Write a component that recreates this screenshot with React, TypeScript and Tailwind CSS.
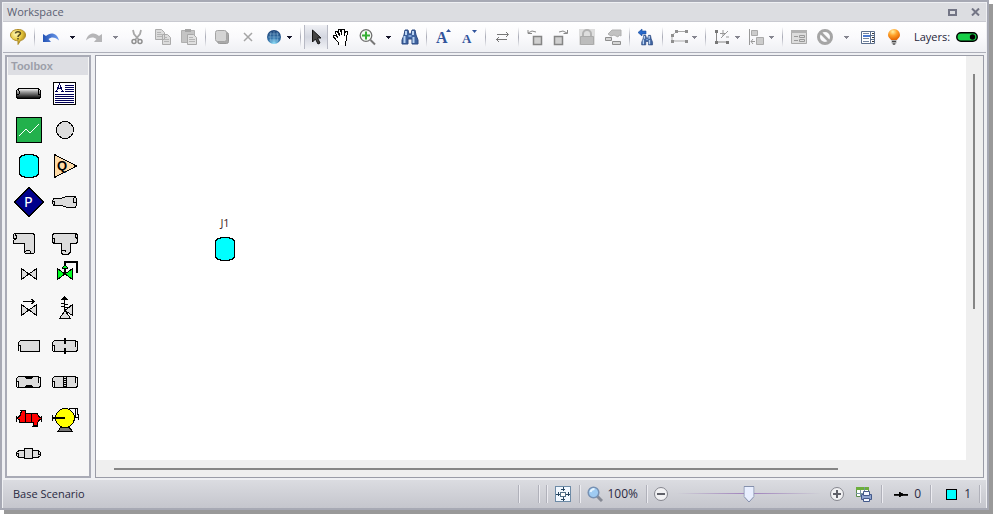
import { useState } from "react";
import type { ReactNode } from "react";

const DropArrow = ({ dim, tight }: { dim?: boolean; tight?: boolean }) => (
  <button
    aria-label="More options"
    className={`flex h-6 shrink-0 items-center ${tight ? "w-[10px] justify-start" : "w-[17px] justify-center"}`}
  >
    <svg width="5" height="3" shapeRendering="crispEdges">
      <path d="M0 0h5v1h-1v1h-1v1h-1v-1h-1v-1h-1z" fill={dim ? "#85858f" : "#15152a"} />
    </svg>
  </button>
);

const Separator = () => (
  <span className="flex h-5 w-[7px] shrink-0 justify-center">
    <span className="w-px bg-linear-to-b from-transparent via-[#a9abb6] to-transparent" />
  </span>
);

function Tool({ label, narrow, active, children }: { label: string; narrow?: boolean; active?: boolean; children: ReactNode }) {
  return (
    <button
      aria-label={label}
      className={`flex h-6 shrink-0 items-center justify-center ${narrow ? "w-6" : "w-[26px]"} ${
        active ? "border-x border-[#b7b9c4] bg-linear-to-b from-[#f0f1f5] via-[#d3d6e0] to-[#f0f1f5]" : ""
      }`}
    >
      <svg width="18" height="18" viewBox="0 0 18 18" fill="none" className="overflow-visible">
        {children}
      </svg>
    </button>
  );
}

const Binoculars = () => (
  <>
    <path d="M4 2h3l1 4h2l1-4h3l1 5 2 5v4h-6v-5h-4v5h-6v-4l2-5z" fill="#3f639f" stroke="#2c4a82" />
    <path d="M3.500 8v7M5 3v4M12 3v4M12.500 9v6" stroke="#b9d3f2" strokeWidth="2" />
    <path d="M7.500 7h3v2h-3z" fill="#7ea2d6" />
  </>
);

function Toolbar() {
  return (
    <div className="flex h-[30px] items-center overflow-hidden bg-linear-to-b from-white via-[#fafafc] to-[#eff0f4] pl-0.5">
      <Tool label="Help">
        <defs>
          <radialGradient id="gold" cx=".35" cy=".3" r=".8">
            <stop offset="0" stopColor="#fff8b8" />
            <stop offset=".5" stopColor="#e6c73c" />
            <stop offset="1" stopColor="#94700f" />
          </radialGradient>
        </defs>
        <path d="M9 1.500c5 0 7.500 2.500 7.500 5.500 0 2.800-2 5-5 5.500L9 16.500v-3.700C4.500 12.500 1.500 10 1.500 7 1.500 4 4.500 1.500 9 1.500z" fill="url(#gold)" stroke="#b08c28" />
        <path d="M6.500 5.500c0-2.500 5-2.500 5 0 0 1.500-2.500 1.500-2.500 3.500M9 10v1.500" stroke="#544a20" strokeWidth="1.500" />
      </Tool>
      <Separator />
      <Tool label="Undo">
        <defs>
          <linearGradient id="undo" x1="0" x2="1">
            <stop offset="0" stopColor="#2453b5" />
            <stop offset="1" stopColor="#6d9bec" />
          </linearGradient>
        </defs>
        <path d="M1 6v8h8l-2.500-3c3-2.500 7-2 10.500 1.500C15.500 5 8.500 3.500 4 8z" fill="url(#undo)" />
      </Tool>
      <DropArrow />
      <Tool label="Redo">
        <path d="M17 6v8H9l2.500-3c-3-2.500-7-2-10.500 1.500C2.500 5 9.500 3.500 14 8z" fill="#b5b5b7" />
      </Tool>
      <DropArrow dim />
      <Tool label="Cut">
        <path d="M5 2l1 4 5 6M13 2l-1 4-5 6" stroke="#a8a8a8" strokeWidth="1.800" />
        <circle cx="6" cy="13.500" r="2" stroke="#909090" strokeWidth="1.500" />
        <circle cx="12" cy="13.500" r="2" stroke="#909090" strokeWidth="1.500" />
      </Tool>
      <Tool label="Copy">
        <path d="M1.500 1.500h6l3 3v7h-9zM8.500 6.500h5l3 3v7h-8z" fill="#dcdcdc" stroke="#ababab" />
        <path d="M3 4.500h4M3 6.500h5M3 8.500h5M10 9.500h3M10 11.500h5M10 13.500h5" stroke="#b5b5b5" />
      </Tool>
      <Tool label="Paste">
        <path d="M1.500 2.500h13v12h-13z" fill="#c4c4c4" stroke="#b0b0b0" />
        <path d="M5 1h6v3H5z" fill="#a5a5a5" />
        <path d="M7.500 6.500h6l3 3v7h-9z" fill="#e0e0e0" stroke="#a8a8a8" />
        <path d="M9 9.500h4M9 11.500h6M9 13.500h6" stroke="#b5b5b5" />
      </Tool>
      <Separator />
      <Tool label="Duplicate">
        <rect x="4.500" y="4.500" width="11" height="11" rx="2" fill="#aaa" stroke="#999" />
        <rect x="2.500" y="2.500" width="11" height="11" rx="2" fill="#d4d4d4" stroke="#a4a4a4" />
      </Tool>
      <Tool label="Delete">
        <path d="M5 5l8 8M13 5l-8 8" stroke="#a5a5a5" strokeWidth="1.500" />
      </Tool>
      <Tool label="Globe">
        <defs>
          <radialGradient id="globe" cx=".5" cy=".95" r=".9">
            <stop offset="0" stopColor="#8de0fa" />
            <stop offset=".45" stopColor="#3474ab" />
            <stop offset="1" stopColor="#1d4479" />
          </radialGradient>
        </defs>
        <circle cx="9" cy="9" r="7" fill="url(#globe)" />
        <path d="M4 6h10M3 9h12M4 12h10M9 3v12M6 4q-2 5 0 10M12 4q2 5 0 10" stroke="#a5cfe8" strokeOpacity=".4" />
      </Tool>
      <DropArrow tight />
      <Separator />
      <Tool label="Select" narrow active>
        <path d="M5.500 2v12l3-3 2.500 5 2-1-2.500-5H14z" fill="#444" stroke="#111" />
      </Tool>
      <Tool label="Pan">
        <path
          d="M6.500 16.500v-2l-5-5.500v-1.500h2l2 2L3.500 4.500v-1h1.500l2.500 4-1-5v-1h2l1 5.500.5-5.500h2v6l1.500-4.500h1.500l.5 1.500-1 4.500v3l-1.500 3v2.500"
          fill="#fff"
          stroke="#000"
          shapeRendering="crispEdges"
        />
      </Tool>
      <Tool label="Zoom">
        <circle cx="8" cy="7.500" r="5.800" fill="#f4faf4" stroke="#707070" strokeWidth="1.300" />
        <path d="M12.500 12l4.500 4.500" stroke="#777" strokeWidth="2" />
        <path d="M8 3.500v8M4 7.500h8" stroke="#35ae35" strokeWidth="2" />
      </Tool>
      <DropArrow />
      <Tool label="Find"><Binoculars /></Tool>
      <Separator />
      <Tool label="Increase font">
        <text x="2" y="15" fontFamily="Liberation Serif, serif" fontSize="16" fontWeight="700" fill="#31549c">A</text>
        <path d="M12 4h5l-2.500-3z" fill="#31549c" />
      </Tool>
      <Tool label="Decrease font">
        <text x="2" y="15" fontFamily="Liberation Serif, serif" fontSize="13" fontWeight="700" fill="#31549c">A</text>
        <path d="M12 2h5l-2.500 3z" fill="#31549c" />
      </Tool>
      <Separator />
      <Tool label="Reverse">
        <path d="M4 6.500h11M13 4l2.500 2.500L13 9M14 11.500H3M6 9l-2.500 2.500L6 14" stroke="#777" />
      </Tool>
      <Separator />
      <Tool label="Rotate left">
        <path d="M7.500 8.500h8v8h-8z" fill="#d0d0d0" stroke="#858585" strokeWidth="1.500" />
        <path d="M10 4L6 3 2 5M2 2v3.500h4" stroke="#888" />
      </Tool>
      <Tool label="Rotate right">
        <path d="M2.500 8.500h8v8h-8z" fill="#d0d0d0" stroke="#858585" strokeWidth="1.500" />
        <path d="M7 4l4-1 4 2M15.500 2v3.500h-4" stroke="#888" />
      </Tool>
      <Tool label="Lock">
        <path d="M1 1h16v16H1z" fill="#dedede" />
        <path d="M5 8V6a4 4 0 018 0v2" stroke="#b3b3b3" strokeWidth="2" />
        <path d="M2.500 8.500h13v8h-13z" fill="#bcbcbc" stroke="#aaa" />
      </Tool>
      <Tool label="Annotate">
        <path d="M4 6l4-4h9v6l-2-1-1 2-4-2-3 1z" fill="#c2c2c2" stroke="#b0b0b0" />
        <path d="M1.500 9.500h6v3h-6zM8.500 13.500h8v3h-8z" fill="#d5d5d5" stroke="#8e8e8e" />
      </Tool>
      <Separator />
      <Tool label="Find previous">
        <g transform="translate(4 6) scale(.68)"><Binoculars /></g>
        <path d="M1 4.500L5 1v2h4v3H5v2z" fill="#2768c9" stroke="#1a4c9b" strokeWidth=".6" />
      </Tool>
      <Separator />
      <Tool label="Segments">
        <path d="M5 3.500h12M4.500 5L2 8.500v4L5 13h11" stroke="#aaa" />
        <path d="M5 2h3v3H5zM15 2h3v3h-3zM1 6h3v3H1zM1 12h3v3H1zM15 12h3v3h-3z" fill="#8f8f8f" />
      </Tool>
      <DropArrow dim tight />
      <Separator />
      <Tool label="Scale">
        <path d="M3.500 3v11h11" stroke="#888" />
        <path d="M2 2h3v3H2zM2 13h3v3H2zM13 13h3v3h-3z" fill="#777" />
        <path d="M7 5.500h6M10 2v6M15 3l-7 7M13 9h3" stroke="#999" />
      </Tool>
      <DropArrow dim tight />
      <Tool label="Align" narrow>
        <path d="M1.500 1v16M3 13.500h4M5 11l-2 2.500L5 16" stroke="#999" />
        <path d="M3.500 2.500h6v5h-6zM8.500 9.500h7v7h-7z" fill="#ccc" stroke="#aaa" />
      </Tool>
      <DropArrow dim tight />
      <Separator />
      <Tool label="Properties">
        <path d="M1.500 2.500h15v13h-15z" fill="#ddd" stroke="#aaa" />
        <path d="M1 2h16v3H1z" fill="#b2b2b2" />
        <path d="M4 8.500h4M4 12.500h4M9.500 7.500h5v2h-5zM9.500 11.500h5v2h-5z" stroke="#999" />
      </Tool>
      <Tool label="Disable">
        <circle cx="9" cy="9" r="6.500" stroke="#a5a5a5" strokeWidth="3" />
        <path d="M4.500 4.500l9 9" stroke="#a5a5a5" strokeWidth="2.500" />
      </Tool>
      <DropArrow dim />
      <Tool label="Output list">
        <path d="M2.500 3.500h13v12h-13z" fill="#fff" stroke="#5b6e8c" />
        <path d="M4 5.500h6M4 10.500h6M4 13.500h6" stroke="#74859f" />
        <path d="M4 8h7" stroke="#4b7ad2" strokeWidth="2" />
        <path d="M11.500 4v11M12 7.500h3M12 11.500h3" stroke="#5b6e8c" />
        <path d="M13 5h2v1h-2zM13 9h2v1h-2zM13 13h2v1h-2z" fill="#333" />
      </Tool>
      <Tool label="Hints">
        <defs>
          <radialGradient id="bulb" cx=".4" cy=".25" r=".7">
            <stop offset="0" stopColor="#fff0a0" />
            <stop offset=".5" stopColor="#ffa128" />
            <stop offset="1" stopColor="#e56c08" />
          </radialGradient>
        </defs>
        <path d="M9 1a6 6 0 016 6c0 2.500-2.500 3.500-3 5H6C5.500 10.500 3 9.500 3 7a6 6 0 016-6z" fill="url(#bulb)" />
        <path d="M6.500 12h5v3l-1.500 2H8l-1.500-2z" fill="#aaa" />
        <path d="M7 13.500h4M8 16h2" stroke="#444" />
      </Tool>
      <span className="ml-[7px] text-[#1e1e3a]">Layers:</span>
      <button aria-label="Layers" className="ml-1.5 shrink-0">
        <svg width="22" height="10">
          <rect x=".8" y=".8" width="20.400" height="8.400" rx="4.200" fill="#17cf48" stroke="#000" strokeWidth="1.500" />
          <circle cx="16.500" cy="5" r="2.700" />
        </svg>
      </button>
    </div>
  );
}

const Tank = () => (
  <path
    d="M13.500 7.500h9v1h3v1h1v1h1v17h-1v1h-1v1h-3v1h-9v-1h-3v-1h-1v-1h-1v-17h1v-1h1v-1h3z"
    fill="#0ff"
    stroke="#000"
  />
);

const PipeBody = ({ left = 5, right = 29 }: { left?: number; right?: number }) => (
  <>
    <rect x={left + 0.5} y="13.500" width={right - left} height="11" rx="3" fill="#dcdcdc" stroke="#000" />
    <ellipse cx={left + 1.5} cy="21" rx="1.500" ry="3" fill="#f7f7f7" stroke="#000" />
    <ellipse cx={right - 0.5} cy="17" rx="1.500" ry="3" fill="#f7f7f7" stroke="#000" />
  </>
);

const Bowtie = ({ fill = "#dcdcdc" }: { fill?: string }) => (
  <path d="M10.500 13.500v11l15-11v11z" fill={fill} stroke="#000" />
);

const junctions: { name: string; art: ReactNode }[] = [
  {
    name: "Pipe",
    art: (
      <>
        <defs>
          <linearGradient id="pipe" x1="0" y1="0" x2="0" y2="1">
            <stop offset="0" stopColor="#fff" />
            <stop offset=".35" stopColor="#999" />
            <stop offset="1" stopColor="#000" />
          </linearGradient>
        </defs>
        <rect x="5.500" y="13.500" width="24" height="10" rx="3" fill="url(#pipe)" stroke="#000" />
        <path d="M7 14l1 2v3l-2 1M28 14l-1 2v3l2 1" stroke="#000" />
      </>
    ),
  },
  {
    name: "Annotation",
    art: (
      <>
        <path d="M6.500 7.500h22v22h-22z" fill="#fff" stroke="#000" />
        <path d="M18 10.500h9M18 12.500h9M18 14.500h9M18 16.500h9M8 19.500h19M8 21.500h19M8 23.500h19M8 25.500h19M8 27.500h19" stroke="#000058" />
        <path d="M8 16.500h3M14 16.500h3M9.500 16l3-7 3 7M11 13.500h4" stroke="#000058" />
      </>
    ),
  },
  {
    name: "Graph",
    art: (
      <>
        <path d="M5.500 6.500h25v25h-25z" fill="#22b14c" stroke="#000" />
        <path d="M8 25l7-7 4 4 9-9" stroke="#fff" />
      </>
    ),
  },
  { name: "Branch", art: <circle cx="18" cy="19" r="8.500" fill="#dcdcdc" stroke="#000" /> },
  { name: "Reservoir", art: <Tank /> },
  {
    name: "Assigned flow",
    art: (
      <>
        <path d="M7.500 7.500v23L29.500 19z" fill="#ffdca8" stroke="#000" />
        <text x="10" y="23" fontFamily="Liberation Sans, sans-serif" fontSize="13" fontWeight="700" fill="#000">Q</text>
      </>
    ),
  },
  {
    name: "Assigned pressure",
    art: (
      <>
        <path d="M18 4.500L32.500 19 18 33.500 3.500 19z" fill="#00008b" stroke="#000" />
        <text x="13" y="24" fontFamily="DejaVu Sans, sans-serif" fontSize="14" fill="#fff">P</text>
      </>
    ),
  },
  {
    name: "Area change",
    art: (
      <>
        <path d="M7 15.500h7l5-2h9l1.500 2v7l-1.500 2h-8l-5-2H7l-1.500-2v-3z" fill="#dcdcdc" stroke="#000" />
        <path d="M5.500 18.500h2v4h-1M28 14l-1.500 2v3l2.500 1" stroke="#000" />
      </>
    ),
  },
  {
    name: "Bend",
    art: (
      <>
        <path d="M3.500 14.500h18l2 1v18l-1 1h-8l-1-1v-9h-11v-3l1-1-1-2v-3z" fill="#dcdcdc" stroke="#000" />
        <path d="M3.500 14.500l1.500 2v3l-1.500 2M13.500 33l2-1.500h3l1.500 2" stroke="#000" />
      </>
    ),
  },
  {
    name: "Tee",
    art: (
      <>
        <path d="M7 14.500h22l1.500 1.500v7l-1.500 1.500h-6v9l-1.500 1.500h-6l-1.500-1.500v-9h-7l-1.500-1.500v-7z" fill="#dcdcdc" stroke="#000" />
        <path d="M6 19.500h1.500v4M30 19.500l-2-1.500v-3M14 33l2-1.500h2l1.500 2" stroke="#000" />
      </>
    ),
  },
  { name: "Valve", art: <Bowtie /> },
  {
    name: "Control valve",
    art: (
      <>
        <Bowtie fill="#00ff21" />
        <path d="M18 19v-6" stroke="#000" strokeWidth="2" />
        <path d="M15.500 13.500v-1l2-2h1l2 2v1z" fill="#00ff21" stroke="#000" />
        <path d="M18 10V7h12v11" stroke="#000" strokeWidth="2" />
      </>
    ),
  },
  {
    name: "Check valve",
    art: (
      <>
        <Bowtie />
        <path d="M12 10.500h11M20.500 8l2.500 2.500-2.500 2.500" stroke="#000" />
      </>
    ),
  },
  {
    name: "Relief valve",
    art: (
      <>
        <path d="M18 19.500l7.500-6v11zM18 19.500l-5.500 8h11z" fill="#dcdcdc" stroke="#000" />
        <path d="M17.500 19V8M14 12l7 2M14 15l7 2" stroke="#000" />
        <path d="M13 9h9l-4.500-4z" fill="#000" />
      </>
    ),
  },
  {
    name: "Dead end",
    art: (
      <>
        <path d="M9.500 13.500h19v11h-19l-2-2v-7z" fill="#dcdcdc" stroke="#000" />
        <ellipse cx="8.500" cy="21" rx="1.500" ry="3" fill="#f7f7f7" stroke="#000" />
      </>
    ),
  },
  {
    name: "Orifice",
    art: (
      <>
        <PipeBody right={30} />
        <path d="M18 11v6M18 21v6" stroke="#000" strokeWidth="2" />
      </>
    ),
  },
  {
    name: "Venturi",
    art: (
      <>
        <PipeBody />
        <path d="M12 13h11l-3 3h-5zM12 25h11l-3-3h-5z" fill="#000" />
      </>
    ),
  },
  {
    name: "Screen",
    art: (
      <>
        <PipeBody right={30} />
        <path d="M16.500 13v12M19.500 13v12M17 15.500h3M17 17.500h3M17 19.500h3M17 21.500h3M17 23.500h3" stroke="#000" />
      </>
    ),
  },
  {
    name: "Heat exchanger",
    art: (
      <>
        <path d="M5.500 17v6M30.500 17v6" stroke="#000" />
        <path d="M6 19.500l3-3V14l1-.5v-2h4v3h12l2 3 2.500 2-2.500 2-2 3v2h-4v-3H9l-1-3z" fill="#f00" stroke="#000" />
        <path d="M14.500 14v10M20.500 14v10M9 11.500h6M21 27h6" stroke="#000" />
      </>
    ),
  },
  {
    name: "Pump",
    art: (
      <>
        <path d="M14 28h8l3 4H11z" fill="#777" stroke="#000" />
        <circle cx="18" cy="19" r="9.500" fill="#ff0" stroke="#000" />
        <path d="M6 19h12" stroke="#000" strokeWidth="2" />
        <path d="M5.500 16v6M22 9.500h8V16M28.500 10v8h3M31.500 15v6" stroke="#000" />
      </>
    ),
  },
  {
    name: "General component",
    art: (
      <>
        <path d="M8 15.500h19l2.500 2v3l-2.500 2H8l-2.500-2v-3z" fill="#dcdcdc" stroke="#000" />
        <path d="M5.500 18.500h2v3M29.500 19.500h-2v-3" stroke="#000" />
        <path d="M13.500 13.500h8v10h-8z" fill="#dcdcdc" stroke="#000" />
      </>
    ),
  },
];

function Toolbox() {
  return (
    <aside className="flex w-[86px] shrink-0 flex-col border-2 border-[#a9abb6] bg-[#f7f7f7]">
      <h2 className="mx-px flex h-[18px] items-center bg-[#dddee3] pl-[3px] font-['Liberation_Sans',sans-serif] text-[11px] font-bold text-[#9c9ea9]">
        Toolbox
      </h2>
      <div className="grid grid-cols-[36px_36px] pl-1">
        {junctions.map(({ name, art }) => (
          <button key={name} aria-label={name} className="size-9">
            <svg width="36" height="36" fill="none" shapeRendering="crispEdges">
              {art}
            </svg>
          </button>
        ))}
      </div>
    </aside>
  );
}

function Canvas() {
  return (
    <main className="flex min-w-0 flex-1 flex-col border border-[#9a9ca7] bg-[#efefef]">
      <div className="flex flex-1">
        <div className="relative flex-1 bg-white">
          <div className="absolute top-[160px] left-[111px] flex w-9 flex-col items-center text-black">
            <span className="h-[14px] leading-[13px] text-[#40201c]">J1</span>
            <svg width="36" height="36" fill="none" shapeRendering="crispEdges">
              <Tank />
            </svg>
          </div>
        </div>
        <div className="flex w-[17px] justify-center pt-[18px] pr-0.5">
          <div className="h-[61%] w-0.5 bg-[#868686]" />
        </div>
      </div>
      <div className="flex h-[17px] items-center pr-[17px] pl-[18px]">
        <div className="h-0.5 w-[85%] bg-[#868686]" />
      </div>
    </main>
  );
}

const StatusLine = () => <span className="h-[18px] w-px shrink-0 bg-[#b0b1ba] shadow-[1px_0_0_#ececf1]" />;

function ZoomButton({ plus }: { plus?: boolean }) {
  return (
    <button aria-label={plus ? "Zoom in" : "Zoom out"}>
      <svg width="16" height="16" fill="none">
        <circle cx="8" cy="8" r="6.500" fill="#f2f2f4" stroke="#85868e" />
        <path d={plus ? "M4 8h8M8 4v8" : "M4 8h8"} stroke="#606169" strokeWidth="2" />
      </svg>
    </button>
  );
}

function StatusBar() {
  const [zoom, setZoom] = useState(50);

  return (
    <footer className="flex h-7 items-center bg-linear-to-b from-[#dbdce1] to-[#c5c6cd] pr-1.5 pl-2.5 text-[#2a2a42]">
      <span>Base Scenario</span>
      <div className="ml-auto flex items-center">
        <StatusLine />
        <span className="w-[19px]" />
        <StatusLine />
        <span className="w-[7px]" />
        <StatusLine />
        <button aria-label="Fit to window" className="mx-2">
          <svg width="16" height="16" fill="none" shapeRendering="crispEdges">
            <path d="M.5.5h15v15H.5z" fill="#f2f8ff" stroke="#6c8aa6" />
            <path d="M8 1v4M8 11v4M1 8h4M11 8h4M6 3h4M6 13h4M3 6v4M13 6v4" stroke="#284660" />
            <path d="M5.500 6.500h5v4h-5z" fill="#fff" stroke="#537088" />
          </svg>
        </button>
        <StatusLine />
        <button className="flex items-center gap-1 pr-2 pl-[7px] text-xs">
          <svg width="16" height="16" fill="none">
            <path d="M10 10l5 5" stroke="#858994" strokeWidth="3" />
            <circle cx="6.500" cy="6.500" r="5.300" fill="#9fcbf2" stroke="#7791b3" strokeWidth="1.500" />
            <path d="M3.500 6q1-3 4-3" stroke="#e7f5ff" strokeWidth="2" />
          </svg>
          {zoom * 2}%
        </button>
        <StatusLine />
        <div className="flex items-center gap-2 px-1.5">
          <ZoomButton />
          <div className="relative h-4 w-36">
            <div className="mt-[7px] h-px bg-linear-to-r from-transparent via-[#9e7fbb] to-transparent" />
            <svg width="11" height="17" fill="none" className="absolute top-0 -translate-x-1/2" style={{ left: `${zoom}%` }}>
              <path d="M.5.5h10v10l-5 5.500-5-5.500z" fill="#e9efff" stroke="#8590ac" />
            </svg>
            <input
              type="range"
              aria-label="Zoom level"
              min={5}
              max={95}
              value={zoom}
              onChange={(e) => setZoom(Number(e.target.value))}
              className="absolute inset-0 w-full opacity-0"
            />
          </div>
          <ZoomButton plus />
        </div>
        <button aria-label="Print layout" className="mr-2 ml-1">
          <svg width="18" height="16" fill="none">
            <path d="M1.500 1.500h12v9h-12z" fill="#fff" stroke="#5b8b49" />
            <path d="M1 1h13v3H1z" fill="#6cae3c" />
            <path d="M1 7.500h8M5.500 4v7M9.500 1v6" stroke="#7695a0" />
            <path d="M6.500 8.500h10v5h-10z" fill="#8ea4cf" stroke="#43598a" />
            <path d="M8.500 5.500h6v4h-6zM8.500 12.500h6v3h-6z" fill="#f3f7ff" stroke="#43598a" />
          </svg>
        </button>
        <StatusLine />
        <span className="flex w-12 items-center justify-between pr-[9px] pl-3 text-xs">
          <svg width="14" height="7" shapeRendering="crispEdges">
            <path d="M0 3h14v1H0zM5 1l5 2.500-5 2.500z" stroke="#000" strokeWidth=".8" />
          </svg>
          0
        </span>
        <StatusLine />
        <span className="flex w-12 items-center justify-between pr-2 pl-[15px] text-xs">
          <span className="size-[11px] border border-black bg-[#00ffff]" />
          1
        </span>
        <StatusLine />
      </div>
    </footer>
  );
}

export default function App() {
  return (
    <div className="flex min-h-screen bg-white pr-1 pb-1 font-['Open_Sans','Noto_Sans',sans-serif] text-[11px]">
      <div className="flex min-w-0 flex-1 flex-col border-2 border-[#a7a9b4] bg-[#eff0f3] px-px pt-px shadow-[4px_4px_0_#999]">
        <header className="flex h-[18px] items-center bg-[#dcdde1] pr-1.5 pl-1 text-[#5b5f73]">
          <h1>Workspace</h1>
          <div className="ml-auto flex items-center gap-3.5">
            <button aria-label="Maximize">
              <svg width="9" height="7" fill="none"><path d="M1 1h7v5H1z" stroke="#737585" strokeWidth="2" /></svg>
            </button>
            <button aria-label="Close">
              <svg width="9" height="8" fill="none"><path d="M1 .5l7 7M8 .5l-7 7" stroke="#737585" strokeWidth="2" /></svg>
            </button>
          </div>
        </header>
        <div className="border-t border-b border-t-[#c9cad1] border-b-[#adafb9]">
          <Toolbar />
        </div>
        <div className="flex flex-1 gap-1 px-0.5 pt-0.5 pb-0.5">
          <Toolbox />
          <Canvas />
        </div>
        <StatusBar />
      </div>
    </div>
  );
}
